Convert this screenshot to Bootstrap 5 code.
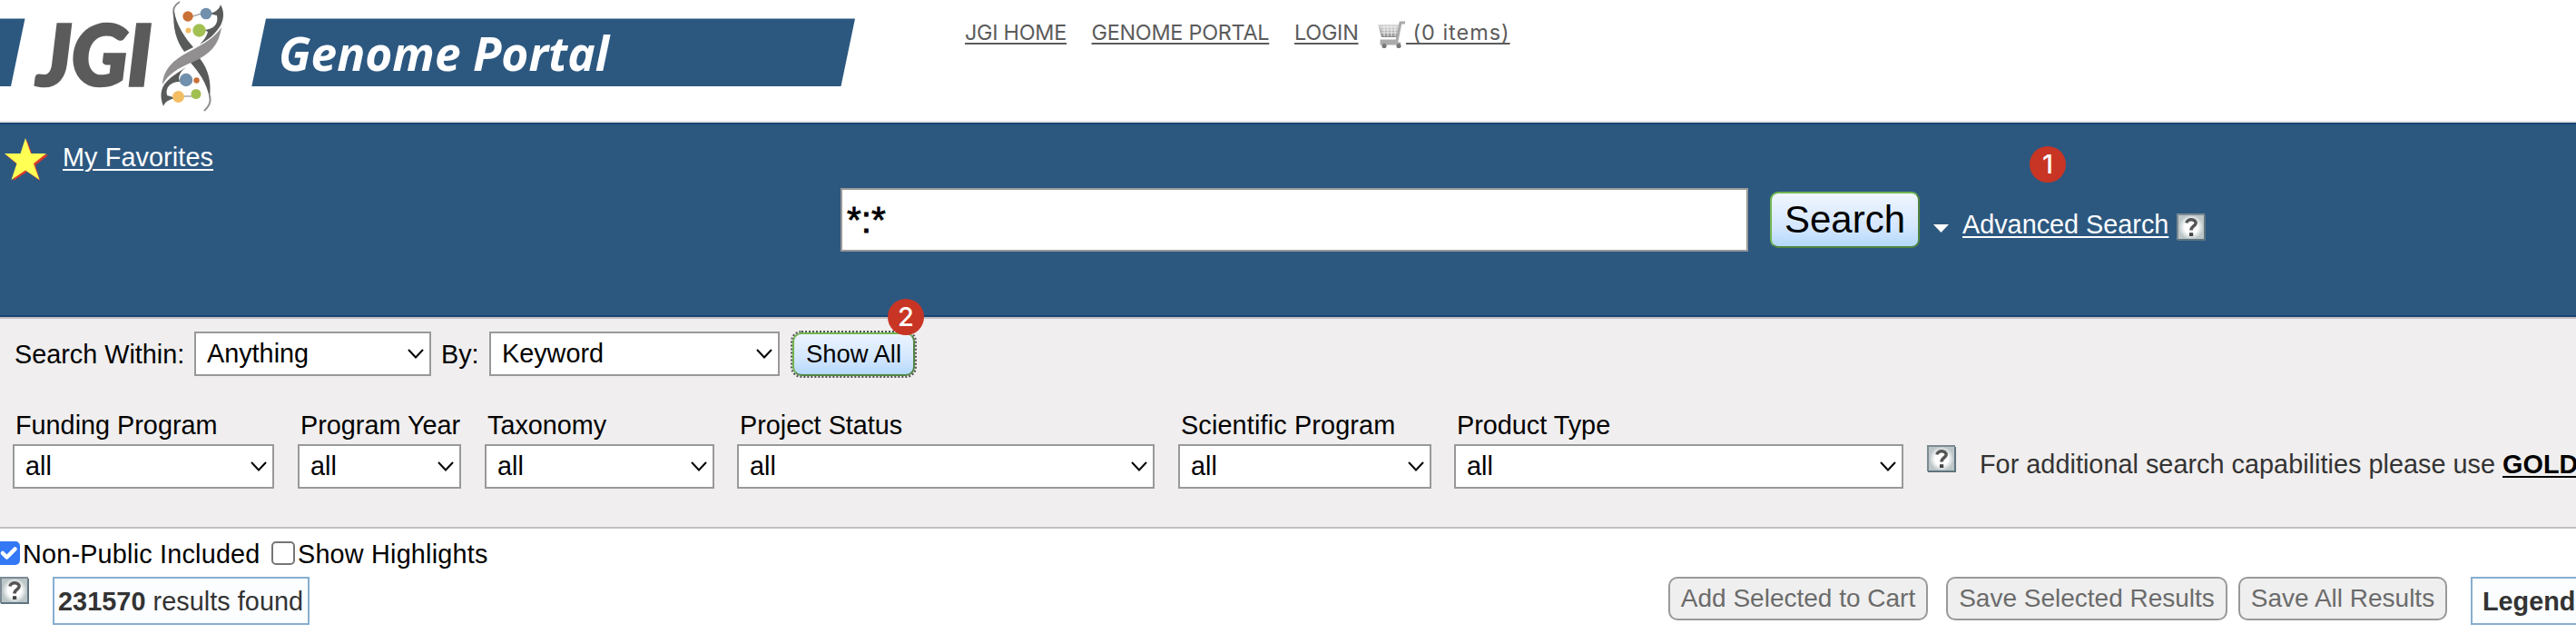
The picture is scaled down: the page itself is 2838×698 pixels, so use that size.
<!DOCTYPE html>
<html lang="en">
<head>
<meta charset="utf-8">
<meta name="viewport" content="width=device-width, initial-scale=1">
<title>JGI Genome Portal</title>
<link href="https://cdn.jsdelivr.net/npm/bootstrap@5.3.0/dist/css/bootstrap.min.css" rel="stylesheet">
<style>
body{font-family:"Liberation Sans",Arial,sans-serif;font-size:28.8px;line-height:34px;color:#000;background:#fff;overflow:hidden;white-space:nowrap}
.site-head{height:135px;border-bottom:2px solid #e4e4e4}
.site-nav{margin-left:121px;padding-top:19px;font-family:Inter,sans-serif;font-size:23.4px;letter-spacing:-.26px}
.site-nav a{color:#5c5c5c;text-decoration-thickness:2px;text-underline-offset:3px;line-height:34px}
.site-nav .cart-link{letter-spacing:1px}
.nav-a{width:139.5px}.nav-b{width:223.5px}.nav-c{width:91px}
.hero{height:214px;background:#2c5880;border-top:2px solid #194371;border-bottom:2px solid #194371}
.hero a{color:#fff;text-decoration-thickness:2px;text-underline-offset:3px}
.fav-row{height:70px;padding-left:4px}
.fav-row a{margin:19px 0 0 15px;letter-spacing:.1px}
.fav-row svg{margin-top:14px}
.find-row{height:70px;padding-left:926px}
.query{width:1000px;height:70px;border:2px solid #999;border-radius:0;padding:0 5px;font-size:40.5px;line-height:60px;color:#000;-webkit-text-stroke:.8px #000}
.btn-find{width:165px;height:62px;margin-left:24px;padding:0;border:2px solid #70b552;border-right-color:#528541;border-bottom-color:#528541;border-radius:9px;font-size:42px;line-height:1;color:#000;background:linear-gradient(#f0f6ff,#d3e6fd 65%,#b4d9fc)}
.tri{margin:18px 0 0 15px}
.adv{margin:10px 0 0 15px;width:236px}
.marker{position:absolute;width:40px;height:40px;border-radius:50%;background:#c83524;color:#fff;font:500 29px/40px Inter,sans-serif;text-align:center}
.panel{height:233px;background:#f0eeee;border-top:2px solid #c1bfc0;border-bottom:2px solid #c1c1c1}
.within{height:49px;margin-top:14px;padding-left:16px}
.pick{height:49px;border:2px solid #999;border-radius:0;padding:0 30px 0 12px;font-size:28.8px;line-height:43px;color:#000;background:#fff url("data:image/svg+xml,%3Csvg xmlns='http://www.w3.org/2000/svg' width='18' height='11'%3E%3Cpath d='M1 1L9 9.5L17 1' fill='none' stroke='%23000' stroke-width='2'/%3E%3C/svg%3E") no-repeat right 6px center/18px 11px}
.show-all{width:135px;height:48px;padding:0;border:2px solid #70b552;border-right-color:#528541;border-bottom-color:#528541;border-radius:10px;outline:2px dotted #555;font-size:27.4px;line-height:1;color:#000;background:linear-gradient(#ecf4ff,#d3e6fd 60%,#b4d9fc)}
.filters{margin-top:35px;padding-left:14px}
.filters>*{flex-shrink:0}
.filters label{display:block;height:40px;line-height:38px;padding-left:3px}
.more{margin:45px 0 0 26px;color:#333;letter-spacing:.03px}
.more a{color:#000;text-decoration-thickness:2px;text-underline-offset:3px}
.opts{height:34px;margin-top:10px;letter-spacing:.2px}
.opts label{padding:1px 0 0 3px}
.opts .form-check-input{width:26px;height:26px;margin:0;border:2px solid #767676;border-radius:5px;float:none;flex:none}
.opts .form-check-input:checked{background-color:#3478f6;border-color:#3478f6}
.opts .form-check-input.first-check{margin-left:-4px;background-size:30px}
.res-row{margin-top:9px}
.count-box{height:53px;border:2px solid #87aed0;background:#fbfdff;color:#333;line-height:51px;padding-left:4px}
.act{height:48px;padding:0;border:2px solid #999;border-radius:10px;background:#efefef;color:#6b6b6b;font-size:28px;line-height:1}
.q-ico{flex:none}
</style>
</head>
<body>
<svg width="0" height="0" class="position-absolute">
<defs>
<radialGradient id="qg"><stop offset=".55" stop-color="#fff"/><stop offset="1" stop-color="#c3cccd"/></radialGradient>
<linearGradient id="cg" x1="0" y1="0" x2="0" y2="1"><stop offset="0" stop-color="#d9d9d9"/><stop offset="1" stop-color="#8d8d8d"/></linearGradient>
<symbol id="help" viewBox="0 0 32 30"><rect x="1" y="1" width="30" height="28" rx="2" fill="#bcc5c7"/><path d="M1 29V1H31" fill="none" stroke="#7b8b94" stroke-width="2"/><path d="M31 2V29H1" fill="none" stroke="#5f7480" stroke-width="2"/><circle cx="16" cy="15" r="13" fill="url(#qg)"/><path d="M11 10.5C11.500 5.500 21.500 5.500 21 11C20.500 14 16 14 16 18.500" fill="none" stroke="#555" stroke-width="3.600"/><rect x="14" y="21.200" width="4.200" height="3.800" fill="#444"/></symbol>
</defs>
</svg>

<header class="site-head d-flex align-items-start">
<svg width="942" height="133" viewBox="0 0 942 133" class="flex-shrink-0">
<path d="M0 20.500H27.500L12 95H0zM293 20.500H942L926.500 95H277.300z" fill="#2c5880"/>
<text x="41" y="93.700" font-family="Lato" font-weight="900" font-style="italic" font-size="91" fill="#5b5b5b" stroke="#5b5b5b" stroke-width="3.500" textLength="126" lengthAdjust="spacingAndGlyphs">JGI</text>
<text x="307" y="77.500" font-family="Open Sans" font-weight="700" font-style="italic" font-size="52" fill="#fff" textLength="364" lengthAdjust="spacingAndGlyphs">Genome Portal</text>
<path d="M198 2C190 7 190 12 193 22" fill="none" stroke="#8e8c8c" stroke-width="2"/>
<path d="M191.500 11C194 28 205 43 213 52L203 57C194 45 190 30 191.500 11z" fill="#585b5a"/>
<path d="M220 64C230 77 233 90 231 108C227 89 219 80 210 69z" fill="#585b5a"/>
<path d="M231 105C233 114 229 118 225 122" fill="none" stroke="#8e8c8c" stroke-width="2"/>
<path d="M243 5C248 14 246 22 243 28C237 38 229 44 220 49C225 44 228 39 229 35L225 33C235 32 241 27 239 17L230 15C237 14 242 10 243 5z" fill="#585b5a"/>
<path d="M205 74C199 78 188 84 181 93C176 101 177 109 180 117C182 111 188 109 194 108L184 105C182 97 187 90 198 90L197 86C198 80 201 77 205 74z" fill="#585b5a"/>
<path d="M244 30C241 51 230 60 213 68C196 75 186 81 179 93C180 76 191 66 208 57C225 48 237 41 244 30z" fill="#918f90"/>
<path d="M212 18L222 15M198 106H212" stroke="#aaa" stroke-width="1.500"/>
<circle cx="207" cy="18" r="5.700" fill="#c97036"/><circle cx="227" cy="15" r="6.300" fill="#7090ad"/><circle cx="219.500" cy="33.500" r="7.200" fill="#a2c052"/><circle cx="207.500" cy="33.500" r="3" fill="#f3bd62"/><circle cx="205" cy="88" r="7.200" fill="#7090ad"/><circle cx="216.500" cy="88.500" r="3.200" fill="#c97036"/><circle cx="196.500" cy="106.500" r="6.500" fill="#f3bd62"/><circle cx="216" cy="103.500" r="5.500" fill="#a2c052"/>
</svg>
<nav class="site-nav d-flex">
<div class="nav-a"><a href="#">JGI HOME</a></div>
<div class="nav-b"><a href="#">GENOME PORTAL</a></div>
<div class="nav-c"><a href="#">LOGIN</a></div>
<svg width="32" height="31" viewBox="0 0 32 31" class="mt-1"><path d="M1 4H26L23 18H5z" fill="url(#cg)"/><path d="M4 7H24M5 10H24M5 13H23M8 5V17M12 5V17M16 5V17M20 5V17" stroke="#efefef"/><path d="M31 2H26L22 22H5V25H26" fill="none" stroke="#aaa" stroke-width="3"/><circle cx="8" cy="27.500" r="2.600" fill="#777"/><circle cx="24" cy="27.500" r="2.600" fill="#777"/></svg>
<a href="#" class="cart-link">&nbsp;(0 items)</a>
</nav>
</header>

<section class="hero">
<div class="fav-row d-flex align-items-start">
<svg width="50" height="50" viewBox="0 0 50 50"><path d="M26 3.500L31.500 19.500H49.500L35 31L40 48L26 38L10.500 48L16 31L3 20H20z" fill="#d93a2b"/><path d="M24 1L30 18H47L33 29L39.500 47L24 36.500L8.500 47L14.500 29L1 18H18.500z" fill="#ffff54"/></svg>
<a href="#">My Favorites</a>
</div>
<div class="find-row d-flex align-items-center">
<input class="form-control query flex-shrink-0" type="text" value="*:*" aria-label="Search term">
<button class="btn btn-find flex-shrink-0" type="button">Search</button>
<svg class="tri" width="17" height="9"><path d="M0 0H17L8.500 9z" fill="#fff"/></svg>
<div class="adv position-relative"><a href="#">Advanced Search</a><span class="marker" style="left:74px;top:-69px">1</span></div>
<svg class="q-ico" style="margin-top:15px" width="32" height="30"><use href="#help"/></svg>
</div>
</section>

<section class="panel">
<div class="within d-flex align-items-center">
<span style="width:198px">Search Within:</span>
<select class="form-select pick flex-shrink-0" style="width:261px" aria-label="Search within"><option>Anything</option></select>
<span style="width:53px;margin-left:11px">By:</span>
<select class="form-select pick flex-shrink-0" style="width:320px" aria-label="By"><option>Keyword</option></select>
<div class="position-relative" style="margin-left:14px"><button class="btn show-all d-block" type="button">Show All</button><span class="marker" style="left:105px;top:-37px">2</span></div>
</div>
<div class="filters d-flex align-items-start">
<div style="width:314px"><label>Funding Program</label><select class="form-select pick" style="width:288px"><option>all</option></select></div>
<div style="width:206px"><label>Program Year</label><select class="form-select pick" style="width:180px"><option>all</option></select></div>
<div style="width:278px"><label>Taxonomy</label><select class="form-select pick" style="width:253px"><option>all</option></select></div>
<div style="width:486px"><label>Project Status</label><select class="form-select pick" style="width:460px"><option>all</option></select></div>
<div style="width:304px"><label style="letter-spacing:.15px">Scientific Program</label><select class="form-select pick" style="width:279px"><option>all</option></select></div>
<div style="width:495px"><label>Product Type</label><select class="form-select pick" style="width:495px"><option>all</option></select></div>
<svg class="q-ico" style="margin:41px 0 0 26px" width="32" height="30"><use href="#help"/></svg>
<div class="more">For additional search capabilities please use <a href="#" class="fw-bold">GOLD</a></div>
</div>
</section>

<div class="opts d-flex align-items-center">
<input class="form-check-input first-check" type="checkbox" checked id="np"><label for="np" style="width:277px">Non-Public Included</label>
<input class="form-check-input" type="checkbox" id="sh"><label for="sh">Show Highlights</label>
</div>
<div class="res-row d-flex align-items-start">
<svg class="q-ico" width="32" height="30"><use href="#help"/></svg>
<div class="count-box flex-shrink-0" style="width:283px;margin-left:26px;letter-spacing:.06px"><b>231570</b> results found</div>
<button class="btn act flex-shrink-0" style="width:286px;margin-left:1497px">Add Selected to Cart</button>
<button class="btn act flex-shrink-0" style="width:310px;margin-left:20px">Save Selected Results</button>
<button class="btn act flex-shrink-0" style="width:230px;margin-left:12px">Save All Results</button>
<div class="count-box flex-shrink-0 fw-bold" style="width:130px;margin-left:26px;padding-left:11px">Legend</div>
</div>
<script src="https://cdn.jsdelivr.net/npm/bootstrap@5.3.0/dist/js/bootstrap.bundle.min.js"></script>
</body>
</html>
